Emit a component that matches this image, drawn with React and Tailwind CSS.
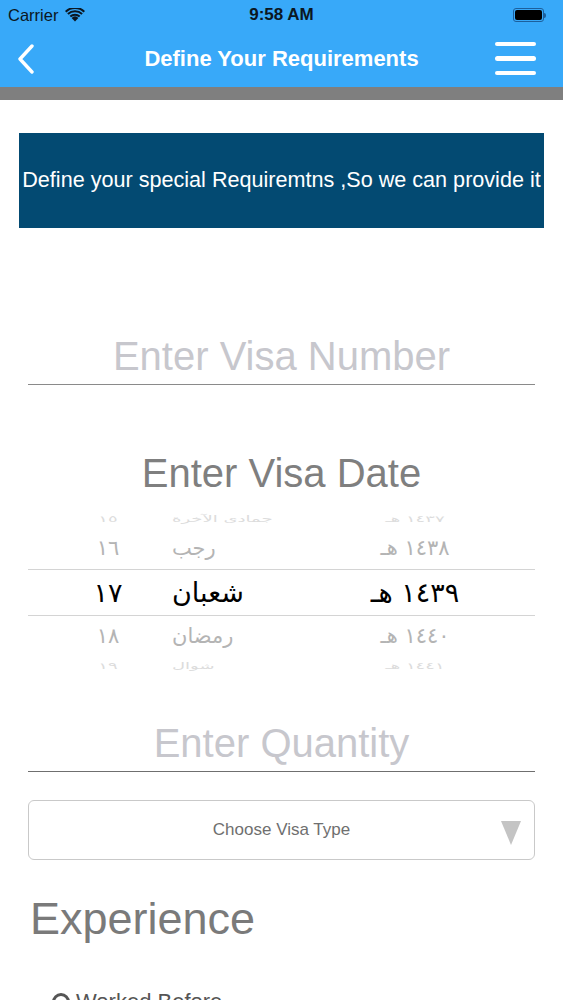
import React from "react";

const ROWS = [
  { day: "١٥", month: "جمادى الآخرة", year: "١٤٣٧ هـ", kind: "far-top" },
  { day: "١٦", month: "رجب", year: "١٤٣٨ هـ", kind: "near" },
  { day: "١٧", month: "شعبان", year: "١٤٣٩ هـ", kind: "selected" },
  { day: "١٨", month: "رمضان", year: "١٤٤٠ هـ", kind: "near" },
  { day: "١٩", month: "شوال", year: "١٤٤١ هـ", kind: "far-bottom" },
];

function StatusBar() {
  return (
    <div className="relative flex h-[30px] items-center px-[8px] text-[#0b1722]">
      <span className="text-[16.5px]">Carrier</span>
      <svg className="ml-[7px] h-[14px] w-[20px]" viewBox="0 0 20 14" fill="#0b1722">
        <path d="M10 13.5 L6.6 9.9 A5 5 0 0 1 13.4 9.9 Z" />
        <path d="M4.6 7.8 A8 8 0 0 1 15.4 7.8 L14 9.3 A6 6 0 0 0 6 9.3 Z" />
        <path d="M2.2 5.3 A11.5 11.5 0 0 1 17.8 5.3 L16.4 6.8 A9.5 9.5 0 0 0 3.6 6.8 Z" />
        <path d="M0 2.9 A14.5 14.5 0 0 1 20 2.9 L18.6 4.4 A12.5 12.5 0 0 0 1.4 4.4 Z" />
      </svg>
      <span className="absolute left-0 right-0 text-center text-[17px] font-semibold">9:58 AM</span>
      <div className="ml-auto mr-[9px] flex items-center">
        <div className="h-[14px] w-[31px] rounded-[3px] border border-[#1c5f9c] p-[1px]">
          <div className="h-full w-full rounded-[2px] bg-black" />
        </div>
        <div className="h-[5px] w-[2px] rounded-r-sm bg-[#1c5f9c]" />
      </div>
    </div>
  );
}

function NavBar() {
  return (
    <div className="relative flex h-[57px] items-center px-[16px]">
      <svg className="h-[30px] w-[20px]" viewBox="0 0 20 30" fill="none" stroke="white" strokeWidth="3.4" strokeLinecap="round" strokeLinejoin="round">
        <path d="M16 2 L4 15 L16 28" />
      </svg>
      <h1 className="absolute left-0 right-0 text-center text-[22px] font-bold text-white">Define Your Requirements</h1>
      <div className="ml-auto mr-[11px] flex w-[41px] flex-col gap-[10px]">
        <div className="h-[4.5px] rounded-full bg-white" />
        <div className="h-[4.5px] rounded-full bg-white" />
        <div className="h-[4.5px] rounded-full bg-white" />
      </div>
    </div>
  );
}

function PickerRow({ row }) {
  const sel = row.kind === "selected";
  const near = row.kind === "near";
  const far = row.kind === "far-top" || row.kind === "far-bottom";
  const h = sel ? "h-[47px] border-y border-[#d4d4d4]" : near ? "h-[41px]" : row.kind === "far-top" ? "h-[19px]" : "h-[15px]";
  const color = sel ? "text-black text-[27px]" : near ? "text-[#b4b4b4] text-[21px]" : "text-[#dcdcdc] text-[18px]";
  const squash = far ? "scale-y-[0.5]" : "";
  const align = row.kind === "far-top" ? "items-end" : row.kind === "far-bottom" ? "items-start" : "items-center";
  return (
    <div className={`flex overflow-hidden ${h} ${align}`}>
      <div className={`flex w-full leading-none ${color} ${squash}`}>
        <div className="w-[143px] pl-[17px] text-center">{row.day}</div>
        <div className="w-[170px] pl-[1px]" dir="rtl" style={{ textAlign: "left" }}>{row.month}</div>
        <div className="w-[148px]" dir="rtl" style={{ textAlign: "center" }}>{row.year}</div>
      </div>
    </div>
  );
}

export default function App() {
  return (
    <div className="min-h-screen w-[563px] bg-white font-['Liberation_Sans',Arial,sans-serif]">
      <div className="bg-[#38a9f9]">
        <StatusBar />
        <NavBar />
      </div>
      <div className="h-[13px] bg-[#7f7f7f]" />

      <div className="mx-[19px] mt-[33px] flex h-[95px] items-center justify-center overflow-hidden bg-[#034a72]">
        <p className="whitespace-nowrap text-[21.6px] text-white">Define your special Requiremtns ,So we can provide it</p>
      </div>

      <div className="mx-[28px] mt-[104px] border-b border-[#8a8a8a] pb-[4px]">
        <p className="text-center text-[40px] leading-[48px] text-[#c7c7cd]">Enter Visa Number</p>
      </div>

      <p className="mt-[64px] text-center text-[40px] leading-[48px] text-[#7f7f7f]">Enter Visa Date</p>

      <div className="mx-[28px] mt-[12px] font-['DejaVu_Sans',sans-serif]">
        {ROWS.map((r) => (
          <PickerRow key={r.day} row={r} />
        ))}
      </div>

      <div className="mx-[28px] mt-[47px] border-b border-[#6f6f6f] pb-[4px]">
        <p className="text-center text-[40px] leading-[48px] text-[#c7c7cd]">Enter Quantity</p>
      </div>

      <div className="relative mx-[28px] mt-[28px] flex h-[60px] items-center justify-center rounded-[6px] border border-[#c9c9c9]">
        <span className="text-[17px] text-[#6f6f6f]">Choose Visa Type</span>
        <svg className="absolute right-[13px] top-[20px] h-[24px] w-[20px]" viewBox="0 0 20 24">
          <path d="M0 0 H20 L10 24 Z" fill="#c4c4c4" />
        </svg>
      </div>

      <h2 className="ml-[30px] mt-[33px] text-[45px] leading-[52px] text-[#7a7a7a]">Experience</h2>

      <div className="ml-[52px] mt-[44px] flex items-center gap-[6px] pb-[20px] text-[22px] leading-[26px] text-[#555]">
        <span className="inline-block h-[18px] w-[18px] rounded-full border-[3px] border-[#555]" />
        <span>Worked Before</span>
      </div>
    </div>
  );
}
